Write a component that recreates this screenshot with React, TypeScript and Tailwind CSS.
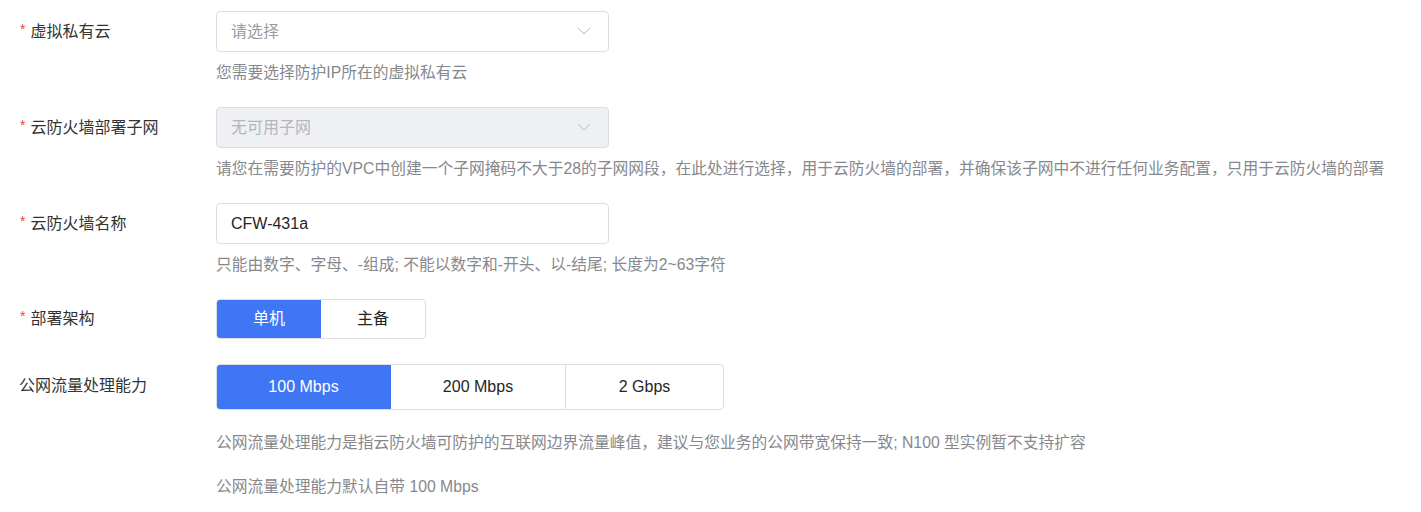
const fontStack = "font-['Liberation_Sans','Noto_Sans_CJK_SC',sans-serif]"

const Chevron = () => (
  <svg width="12" height="7" viewBox="0 0 12 7" fill="none" className="shrink-0">
    <path d="M0.5 0.5L6 6L11.5 0.5" stroke="#b4b7bd" strokeWidth="1" />
  </svg>
)

const Label = ({ text, required = true, h }: { text: string; required?: boolean; h: string }) => (
  <div className={`w-[216px] shrink-0 pl-[19px] flex items-center ${h}`}>
    {required && <span className="text-[#f5483b] text-[14px] ml-[1px] mr-[5px] -mt-[6px] leading-none">*</span>}
    <span className="text-[16px] text-[#333]">{text}</span>
  </div>
)

const Help = ({ children, className = '' }: { children: React.ReactNode; className?: string }) => (
  <p className={`text-[15.75px] leading-[22px] text-[#86888d] whitespace-nowrap ${className}`}>{children}</p>
)

export default function App() {
  return (
    <div className={`bg-white w-[1421px] h-[512px] pt-[11px] ${fontStack}`}>
      {/* 虚拟私有云 */}
      <div className="flex items-start">
        <Label text="虚拟私有云" h="h-[41px]" />
        <div>
          <div className="w-[393px] h-[41px] border border-[#dcdee2] rounded-[4px] flex items-center justify-between pl-[14px] pr-[18px]">
            <span className="text-[16px] text-[#9a9ca1]">请选择</span>
            <Chevron />
          </div>
          <Help className="mt-[10px]">您需要选择防护IP所在的虚拟私有云</Help>
        </div>
      </div>

      {/* 云防火墙部署子网 */}
      <div className="flex items-start mt-[23px]">
        <Label text="云防火墙部署子网" h="h-[41px]" />
        <div>
          <div className="w-[393px] h-[41px] border border-[#dcdee2] bg-[#eff0f3] rounded-[4px] flex items-center justify-between pl-[14px] pr-[18px]">
            <span className="text-[16px] text-[#b4b6bb]">无可用子网</span>
            <Chevron />
          </div>
          <Help className="mt-[10px]">
            请您在需要防护的VPC中创建一个子网掩码不大于28的子网网段，在此处进行选择，用于云防火墙的部署，并确保该子网中不进行任何业务配置，只用于云防火墙的部署
          </Help>
        </div>
      </div>

      {/* 云防火墙名称 */}
      <div className="flex items-start mt-[23px]">
        <Label text="云防火墙名称" h="h-[41px]" />
        <div>
          <div className="w-[393px] h-[41px] border border-[#dcdee2] rounded-[4px] flex items-center pl-[14px]">
            <span className="text-[16px] text-[#252525]">CFW-431a</span>
          </div>
          <Help className="mt-[10px]">只能由数字、字母、-组成; 不能以数字和-开头、以-结尾; 长度为2~63字符</Help>
        </div>
      </div>

      {/* 部署架构 */}
      <div className="flex items-start mt-[23px]">
        <Label text="部署架构" h="h-[40px]" />
        <div className="flex h-[40px] w-[210px] border border-[#dcdee2] rounded-[4px] overflow-hidden">
          <div className="w-[104px] bg-[#3f76f5] flex items-center justify-center text-white text-[16px]">单机</div>
          <div className="flex-1 flex items-center justify-center text-[#252525] text-[16px]">主备</div>
        </div>
      </div>

      {/* 公网流量处理能力 */}
      <div className="flex items-start mt-[25px]">
        <Label text="公网流量处理能力" required={false} h="h-[44px]" />
        <div>
          <div className="flex h-[46px] w-[508px] border border-[#dcdee2] rounded-[4px] overflow-hidden">
            <div className="w-[175px] -my-px -ml-px bg-[#3f76f5] rounded-l-[4px] flex items-center justify-center text-white text-[16px]">100 Mbps</div>
            <div className="w-[175px] border-r border-[#dcdee2] flex items-center justify-center text-[#252525] text-[16px]">200 Mbps</div>
            <div className="flex-1 flex items-center justify-center text-[#252525] text-[16px]">2 Gbps</div>
          </div>
          <Help className="mt-[22px]">
            公网流量处理能力是指云防火墙可防护的互联网边界流量峰值，建议与您业务的公网带宽保持一致; N100 型实例暂不支持扩容
          </Help>
          <Help className="mt-[22px]">公网流量处理能力默认自带 100 Mbps</Help>
        </div>
      </div>
    </div>
  )
}
